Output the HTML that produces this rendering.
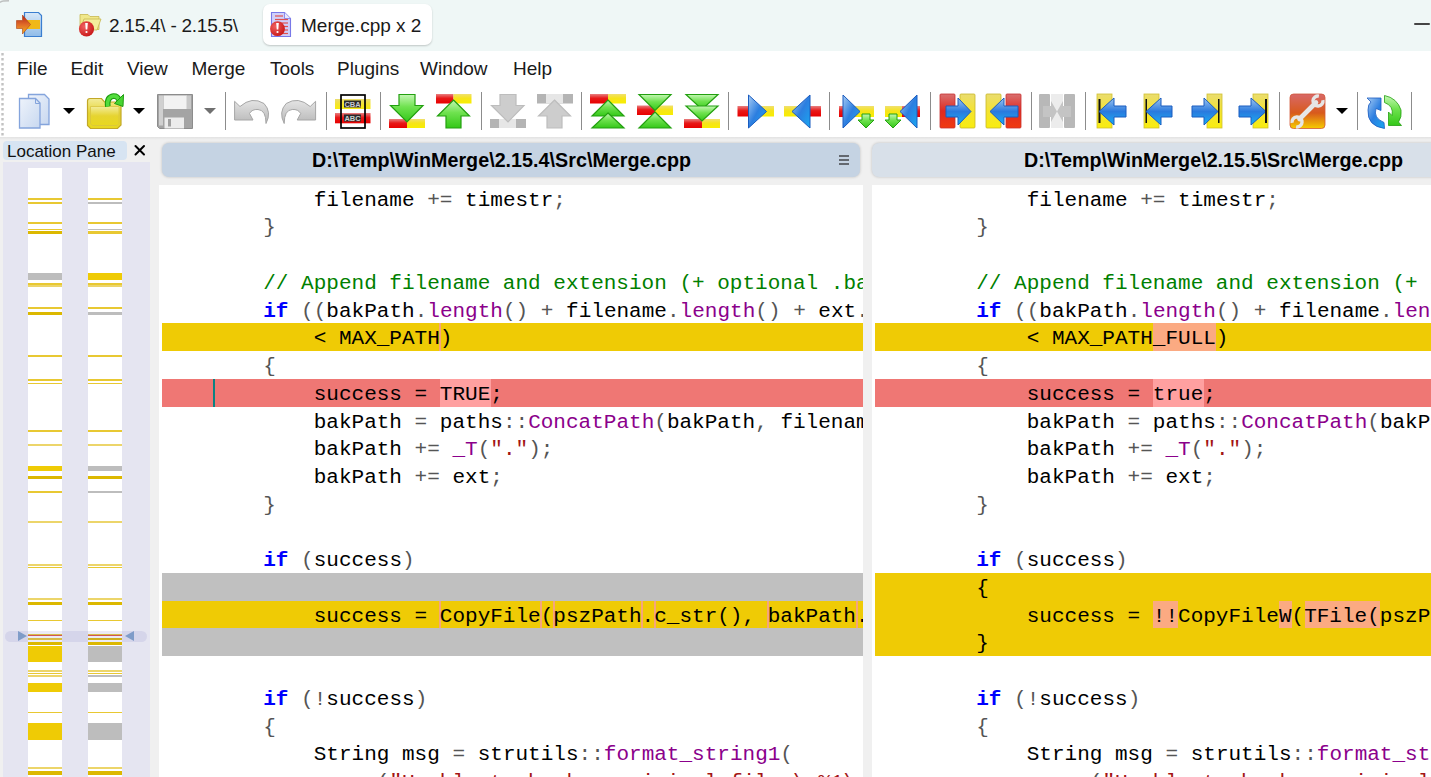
<!DOCTYPE html>
<html><head><meta charset="utf-8">
<style>
*{margin:0;padding:0;box-sizing:border-box}
html,body{width:1431px;height:777px;overflow:hidden;background:#f0f0f0;font-family:"Liberation Sans",sans-serif;position:relative}
.abs{position:absolute}
#tabbar{left:0;top:0;width:1431px;height:51px;background:#eff7f6}
#menubar{left:0;top:51px;width:1431px;height:86px;background:#fff}
.menu{position:absolute;top:58px;font-size:19px;color:#1a1a1a;white-space:pre;line-height:22px}
.ttl{position:absolute;font-size:19px;color:#1a1a1a;white-space:pre;line-height:22px}
/* location pane */
#lplabel{left:3px;top:141px;width:124px;height:19px;background:#d7e4f2;border-radius:4px}
#lptext{left:7px;top:140.5px;font-size:17px;line-height:22px;color:#111;white-space:pre}
#lpclose{left:132px;top:138px;font-size:17px;line-height:22px;color:#111}
#lp{left:3px;top:162px;width:147px;height:615px;background:#e5e5f1}
.bar{position:absolute;top:168px;width:34px;height:609px;background:#fff}
.ln{position:absolute;height:2px;width:34px}
/* headers */
.hdr{position:absolute;top:142.5px;height:34px;border-radius:7px;box-shadow:0 0 3px rgba(0,0,0,0.22)}
.htxt{position:absolute;top:149px;font-weight:bold;font-size:19.7px;letter-spacing:0.03px;line-height:22px;color:#000;white-space:pre}
/* code */
.pane{position:absolute;top:184.6px;height:600px;background:#fff;overflow:hidden}
.row{position:absolute;left:3px;right:0;height:27.74px}
.t{position:absolute;left:50.8px;top:2px;white-space:pre;font-family:"Liberation Mono",monospace;font-size:21.037px;line-height:27.74px;color:#000}
.k{color:#0000ff;font-weight:bold}
.c{color:#008000}
.o{color:#555}
.f{color:#8b008b}
.s{color:#a31515}
.y{background:#efcb05}
.r{background:#ef7774}
.g{background:#c0c0c0}
.y .o,.r .o,.g .o{color:#000}
.wd{position:absolute;top:0;height:100%;background:#fbaa82}
.wr{position:absolute;top:0;height:100%;background:#ffa0a0}
.caret{position:absolute;width:2px;height:27.74px;background:#0b8282}
.mk{position:absolute;top:0;height:100%;width:2px;background:#f5a57c}
</style></head><body>
<div id="tabbar" class="abs"></div>
<div id="menubar" class="abs"></div>


<!-- tab titles -->
<div class="ttl" style="left:109px;top:15px;letter-spacing:-0.25px">2.15.4\ - 2.15.5\</div>
<div class="abs" style="left:263px;top:4px;width:169px;height:41px;background:#fff;border-radius:7px;box-shadow:0 1px 2px rgba(0,0,0,0.2)"></div>
<div class="ttl" style="left:301px;top:15px">Merge.cpp x 2</div>
<div class="abs" style="left:1414px;top:23px;width:15.5px;height:1.8px;background:#454545;border-radius:1px"></div>

<svg class="abs" style="left:0;top:0" width="1431" height="140" viewBox="0 0 1431 140">
<defs>
<linearGradient id="gG" x1="0" y1="0" x2="0" y2="1"><stop offset="0" stop-color="#c4f7b4"/><stop offset="0.45" stop-color="#6fe24f"/><stop offset="1" stop-color="#34c818"/></linearGradient>
<linearGradient id="gR" x1="0" y1="0" x2="0" y2="1"><stop offset="0" stop-color="#e88080"/><stop offset="0.45" stop-color="#e81818"/><stop offset="1" stop-color="#e80000"/></linearGradient>
<linearGradient id="gY" x1="0" y1="0" x2="0" y2="1"><stop offset="0" stop-color="#f0e070"/><stop offset="0.45" stop-color="#f6e41a"/><stop offset="1" stop-color="#f8ee00"/></linearGradient>
<linearGradient id="gB" x1="0" y1="0" x2="1" y2="1"><stop offset="0" stop-color="#a8ccf4"/><stop offset="0.5" stop-color="#2c7ee0"/><stop offset="1" stop-color="#1aa8f0"/></linearGradient>
<linearGradient id="gBh" x1="0" y1="0" x2="0" y2="1"><stop offset="0" stop-color="#9cc4f0"/><stop offset="0.5" stop-color="#2a7ade"/><stop offset="1" stop-color="#18b0f4"/></linearGradient>
<linearGradient id="gRv" x1="0" y1="0" x2="0" y2="1"><stop offset="0" stop-color="#d87070"/><stop offset="0.5" stop-color="#e02a20"/><stop offset="1" stop-color="#f03a10"/></linearGradient>
<linearGradient id="gYv" x1="0" y1="0" x2="0" y2="1"><stop offset="0" stop-color="#eadc70"/><stop offset="0.5" stop-color="#f4e430"/><stop offset="1" stop-color="#f8ec10"/></linearGradient>
<linearGradient id="gGr" x1="0" y1="0" x2="0" y2="1"><stop offset="0" stop-color="#e4e4e4"/><stop offset="1" stop-color="#b8b8b8"/></linearGradient>
<linearGradient id="gW" x1="0" y1="0" x2="0" y2="1"><stop offset="0" stop-color="#d86868"/><stop offset="0.55" stop-color="#d85a1c"/><stop offset="1" stop-color="#f6cc00"/></linearGradient>
<linearGradient id="gDoc" x1="0" y1="0" x2="1" y2="1"><stop offset="0" stop-color="#eef3fb"/><stop offset="1" stop-color="#c8d8f0"/></linearGradient>
<linearGradient id="gFold" x1="0" y1="0" x2="0" y2="1"><stop offset="0" stop-color="#f2ec9a"/><stop offset="0.5" stop-color="#e6d430"/><stop offset="1" stop-color="#e8d820"/></linearGradient>
</defs>
<!-- tab icons -->
<linearGradient id="gAppDoc" x1="0" y1="0" x2="0" y2="1"><stop offset="0" stop-color="#d8e8f8"/><stop offset="1" stop-color="#90bce8"/></linearGradient>
<radialGradient id="gBadge" cx="0.35" cy="0.35" r="0.7"><stop offset="0" stop-color="#f06060"/><stop offset="1" stop-color="#c81818"/></radialGradient>
<linearGradient id="gOr" x1="0" y1="0" x2="0" y2="1"><stop offset="0" stop-color="#b02018"/><stop offset="0.5" stop-color="#e06a28"/><stop offset="1" stop-color="#f4b820"/></linearGradient>
<path d="M24.5 12.5h14l3 3v21h-17z" fill="url(#gAppDoc)" stroke="#3a7ed0" stroke-width="1.2"/>
<rect x="27" y="20" width="13" height="9" fill="#f0b818"/>
<path d="M16.5 20.5h6v-5.5l8 9.5-8 9.5v-5.5h-6z" fill="url(#gOr)" stroke="#b04010" stroke-width="0.6"/>
<path d="M80 14.5h8l2 2h9v13h-19z" fill="#f0e88a" stroke="#c8b850" stroke-width="0.8"/>
<path d="M84 19h17l-4 11h-17z" fill="#f4ee9c" stroke="#c8b850" stroke-width="0.8"/>
<circle cx="86.5" cy="28.8" r="7.6" fill="url(#gBadge)"/>
<path d="M85.2 23h2.6l-0.5 6.5h-1.6z" fill="#fff"/><circle cx="86.5" cy="32" r="1.1" fill="#fff"/>
<path d="M271.5 12.5h13l6 6v18h-19z" fill="#d0d0fa" stroke="#7878e8" stroke-width="1.1"/>
<path d="M284.5 12.5v6h6" fill="#e8e8fc" stroke="#7878e8" stroke-width="0.8"/>
<g stroke="#e05050" stroke-width="1.2"><line x1="275" y1="16" x2="283" y2="16"/><line x1="275" y1="19.5" x2="288" y2="19.5"/><line x1="280" y1="23" x2="288" y2="23"/><line x1="280" y1="26.5" x2="288" y2="26.5"/><line x1="280" y1="30" x2="288" y2="30"/><line x1="280" y1="33.5" x2="288" y2="33.5"/></g>
<circle cx="277.5" cy="28.7" r="7.4" fill="url(#gBadge)"/>
<path d="M276.2 23h2.6l-0.5 6.5h-1.6z" fill="#fff"/><circle cx="277.5" cy="32" r="1.1" fill="#fff"/>
<path d="M0 2.5Q1 0.8 9 0.8" fill="none" stroke="#a8a8a8" stroke-width="1.6" opacity="0.7"/>
<!-- gripper -->
<line x1="2.5" y1="53" x2="2.5" y2="137" stroke="#c2c2c2" stroke-width="2.4" stroke-dasharray="2.4,2.6"/>
<!-- separators -->
<g stroke="#8c8c8c" stroke-width="1">
<line x1="225.5" y1="92" x2="225.5" y2="130"/><line x1="326.5" y1="92" x2="326.5" y2="130"/><line x1="380.5" y1="92" x2="380.5" y2="130"/>
<line x1="481.5" y1="92" x2="481.5" y2="130"/><line x1="581.5" y1="92" x2="581.5" y2="130"/><line x1="728.5" y1="92" x2="728.5" y2="130"/>
<line x1="829.5" y1="92" x2="829.5" y2="130"/><line x1="930.5" y1="92" x2="930.5" y2="130"/><line x1="1031.5" y1="92" x2="1031.5" y2="130"/>
<line x1="1085.5" y1="92" x2="1085.5" y2="130"/><line x1="1279.5" y1="92" x2="1279.5" y2="130"/><line x1="1357.5" y1="92" x2="1357.5" y2="130"/>
<line x1="1411.5" y1="92" x2="1411.5" y2="130"/>
</g>
<!-- 1 new -->
<path d="M28.5 94.5h16l4.5 4.5v25.5h-20.5z" fill="url(#gDoc)" stroke="#84a4dc" stroke-width="1.3"/>
<path d="M19.5 98.5h16l4.5 4.5v25h-20.5z" fill="url(#gDoc)" stroke="#84a4dc" stroke-width="1.3"/>
<path d="M35.5 98.5v5h4.5" fill="none" stroke="#84a4dc" stroke-width="1"/>
<!-- dropdowns -->
<path d="M63 108h12l-6 6z" fill="#000"/>
<path d="M133 108h12l-6 6z" fill="#000"/>
<path d="M204 108h12l-6 6z" fill="#707070"/>
<path d="M1336 108h12l-6 6z" fill="#000"/>
<!-- 3 open -->
<path d="M87.5 101q0-2.5 2.5-2.5h11.5l3 3.5h14q2.5 0 2.5 2.5v20.5l-3.5 3.5h-27l-3-3z" fill="url(#gFold)" stroke="#c2a828" stroke-width="1.2"/>
<path d="M90.5 106.5h28.5v17l-2 2h-24.5l-2-2z" fill="url(#gFold)" stroke="#d8c440" stroke-width="0.8"/>
<path d="M107.8 106.5Q106.5 97 113.5 96Q117.5 95.8 119 100" fill="none" stroke="#1e9c10" stroke-width="5.6"/><path d="M107.8 106.5Q106.5 97 113.5 96Q117.5 95.8 119 100" fill="none" stroke="#52dc3c" stroke-width="3.4"/><path d="M114.5 103.5L123.5 94.5L123 106.5Z" fill="#48d432" stroke="#1e9c10" stroke-width="1"/>
<!-- 5 save -->
<path d="M157.5 94.5h35v34h-33l-2-2z" fill="#a4a4a4" stroke="#8c8c8c" stroke-width="1"/>
<rect x="159" y="95.5" width="4" height="30" fill="#d0d0d0"/>
<rect x="163.5" y="95.5" width="23.5" height="13.5" fill="#f2f2f2"/>
<rect x="186.5" y="95.5" width="4.5" height="13.5" fill="#c8c8c8"/>
<rect x="164.5" y="117.5" width="19.5" height="11" fill="#ececec"/>
<rect x="168" y="119" width="3" height="7.5" fill="#a0a0a0"/>
<!-- 8 undo / 9 redo -->
<path d="M234.6 101.3L240 106.5Q252 96 264 103.5Q272 112 266 123.5Q266 110 258 109.5Q252 109 249.5 113.5L253 120H234.6Z" fill="url(#gGr)" stroke="#a6a6a6" stroke-width="1"/>
<path d="M315.6 101.3L310.2 106.5Q298.2 96 286.2 103.5Q278.2 112 284.2 123.5Q284.2 110 292.2 109.5Q298.2 109 300.7 113.5L297.2 120H315.6Z" fill="url(#gGr)" stroke="#a6a6a6" stroke-width="1"/>
<!-- 11 CBA/ABC -->
<rect x="335" y="99" width="35.5" height="10" fill="url(#gYv)"/>
<rect x="335" y="113" width="35.5" height="10.3" fill="url(#gR)"/>
<rect x="344" y="100.5" width="17" height="7" fill="#2a2a2a"/>
<rect x="344" y="114.5" width="17" height="7" fill="#2a2a2a"/>
<text x="352.5" y="107" font-family="Liberation Sans" font-weight="bold" font-size="7.5" fill="#c8c8d0" text-anchor="middle">CBA</text>
<text x="352.5" y="121" font-family="Liberation Sans" font-weight="bold" font-size="7.5" fill="#c8d0d0" text-anchor="middle">ABC</text>
<rect x="341" y="95" width="24" height="33" fill="none" stroke="#000" stroke-width="1.7"/>
<!-- 13 down -->
<rect x="389" y="119" width="18" height="9" fill="url(#gR)"/><rect x="407" y="119" width="18" height="9" fill="url(#gY)"/>
<path d="M399 94.5h16v11h8l-16 16.5-16.5-16.5h8.5z" fill="url(#gG)" stroke="#23a010" stroke-width="1.2"/>
<!-- 14 up -->
<rect x="436" y="94" width="17.5" height="9.5" fill="url(#gR)"/><rect x="453.5" y="94" width="18" height="9.5" fill="url(#gY)"/>
<path d="M453.5 100l16 16h-8.5v12h-15v-12h-8.5z" fill="url(#gG)" stroke="#23a010" stroke-width="1.2"/>
<!-- 16 grey down -->
<rect x="490" y="119" width="36" height="9" fill="#b4b4b4"/><rect x="499" y="119" width="17" height="9" fill="#e6e6e6"/>
<path d="M500 94.5h16v11h8l-16 16.5-16.5-16.5h8.5z" fill="#cdcdcd" stroke="#bdbdbd" stroke-width="1.2"/>
<!-- 17 grey up -->
<rect x="537" y="94" width="36" height="9.5" fill="#b4b4b4"/><rect x="546" y="94" width="17" height="9.5" fill="#e6e6e6"/>
<path d="M554.5 100l16 16h-8.5v12h-15v-12h-8.5z" fill="#cdcdcd" stroke="#bdbdbd" stroke-width="1.2"/>
<!-- 19 -->
<rect x="590" y="94" width="18" height="9.5" fill="url(#gR)"/><rect x="608" y="94" width="18" height="9.5" fill="url(#gY)"/>
<path d="M608 100l16 16h-32z" fill="url(#gG)" stroke="#23a010" stroke-width="1.2"/>
<path d="M608 113l16 15h-32z" fill="url(#gG)" stroke="#23a010" stroke-width="1.2"/>
<!-- 20 -->
<rect x="637" y="105.5" width="18" height="9.5" fill="url(#gR)"/><rect x="655" y="105.5" width="18" height="9.5" fill="url(#gY)"/>
<path d="M639 94.5h32l-16 16z" fill="url(#gG)" stroke="#23a010" stroke-width="1.2"/>
<path d="M655 112l16 16h-32z" fill="url(#gG)" stroke="#23a010" stroke-width="1.2"/>
<!-- 21 -->
<rect x="684" y="119" width="18" height="9" fill="url(#gR)"/><rect x="702" y="119" width="18" height="9" fill="url(#gY)"/>
<path d="M686 94.5h32l-16 15z" fill="url(#gG)" stroke="#23a010" stroke-width="1.2"/>
<path d="M686 106h32l-16 15z" fill="url(#gG)" stroke="#23a010" stroke-width="1.2"/>
<!-- 23 -->
<rect x="737.5" y="106" width="18" height="10.5" fill="url(#gR)"/><rect x="755.5" y="106" width="18.5" height="10.5" fill="url(#gY)"/>
<path d="M748.5 95l18 16.5-18 16.5z" fill="url(#gB)" stroke="#1a5cc0" stroke-width="1"/>
<!-- 24 -->
<rect x="784" y="106" width="18" height="10.5" fill="url(#gY)"/><rect x="802" y="106" width="19" height="10.5" fill="url(#gR)"/>
<path d="M810 95l-18 16.5 18 16.5z" fill="url(#gB)" stroke="#1a5cc0" stroke-width="1"/>
<!-- 26 -->
<rect x="839" y="106" width="16" height="11" fill="url(#gR)"/><rect x="855" y="106" width="19" height="11" fill="url(#gY)"/>
<path d="M843 95l17 16.5-17 16.5z" fill="url(#gB)" stroke="#1a5cc0" stroke-width="1"/>
<path d="M862 114h8v6h4l-8 8-8-8h4z" fill="url(#gG)" stroke="#23a010" stroke-width="1"/>
<!-- 27 -->
<rect x="885" y="106" width="17" height="11" fill="url(#gY)"/><rect x="902" y="106" width="18" height="11" fill="url(#gR)"/>
<path d="M917 95l-17 16.5 17 16.5z" fill="url(#gB)" stroke="#1a5cc0" stroke-width="1"/>
<path d="M889 114h8v6h4l-8 8-8-8h4z" fill="url(#gG)" stroke="#23a010" stroke-width="1"/>
<!-- 29 -->
<rect x="940" y="94" width="15" height="34" rx="1" fill="url(#gRv)" stroke="#c83030" stroke-width="0.8"/>
<rect x="960" y="94" width="15" height="34" rx="1" fill="url(#gYv)" stroke="#c8b828" stroke-width="0.8"/>
<path d="M946 106h12v-8l13 13.5-13 13.5v-8h-12z" fill="url(#gBh)" stroke="#1a5cc0" stroke-width="1"/>
<!-- 30 -->
<rect x="986" y="94" width="15" height="34" rx="1" fill="url(#gYv)" stroke="#c8b828" stroke-width="0.8"/>
<rect x="1006" y="94" width="15" height="34" rx="1" fill="url(#gRv)" stroke="#c83030" stroke-width="0.8"/>
<path d="M1018 106h-14v-8l-14 13.5 14 13.5v-8h14z" fill="url(#gBh)" stroke="#1a5cc0" stroke-width="1"/>
<!-- 32 grey H -->
<rect x="1039" y="94" width="11" height="34" rx="1" fill="#b8b8b8"/>
<rect x="1051" y="94" width="12" height="34" fill="#ececec"/>
<rect x="1064" y="94" width="11" height="34" rx="1" fill="#b8b8b8"/>
<path d="M1043 106h8v-5l6 10.5-6 10.5v-5h-8z" fill="#c4c4c4"/>
<path d="M1071 106h-8v-5l-6 10.5 6 10.5v-5h8z" fill="#c4c4c4"/>
<!-- 34-37 -->
<rect x="1097" y="94" width="15" height="34" fill="url(#gYv)" stroke="#d0c030" stroke-width="0.8"/>
<rect x="1098.5" y="99" width="2" height="24" fill="#111"/>
<path d="M1099 111.5l15-13.5v8h12v11h-12v8z" fill="url(#gBh)" stroke="#1a5cc0" stroke-width="1"/>
<rect x="1144" y="94" width="15" height="34" fill="url(#gYv)" stroke="#d0c030" stroke-width="0.8"/>
<rect x="1145.5" y="99" width="1.5" height="24" fill="#111"/>
<path d="M1146 111.5l15-13.5v8h11v11h-11v8z" fill="url(#gBh)" stroke="#1a5cc0" stroke-width="1"/>
<rect x="1207" y="94" width="15" height="34" fill="url(#gYv)" stroke="#d0c030" stroke-width="0.8"/>
<path d="M1192 106h12v-8l14 13.5-14 13.5v-8h-12z" fill="url(#gBh)" stroke="#1a5cc0" stroke-width="1"/>
<rect x="1218" y="99" width="1.5" height="24" fill="#111"/>
<rect x="1253" y="94" width="15" height="34" fill="url(#gYv)" stroke="#d0c030" stroke-width="0.8"/>
<path d="M1239 106h12v-8l15 13.5-15 13.5v-8h-12z" fill="url(#gBh)" stroke="#1a5cc0" stroke-width="1"/>
<rect x="1265" y="99" width="2" height="24" fill="#111"/>
<!-- 39 wrench -->
<rect x="1290" y="94" width="35" height="34.5" rx="3.5" fill="url(#gW)" stroke="#d05838" stroke-width="0.8"/>
<path d="M1299.5 119l16.5-16.5" stroke="#e6e6e6" stroke-width="4.6" stroke-linecap="round"/>
<path d="M1322.9 100.1A5 5 0 1 1 1318.9 96.1" fill="none" stroke="#e6e6e6" stroke-width="3.4"/>
<path d="M1292.1 122.9A5 5 0 1 1 1296.1 126.9" fill="none" stroke="#e6e6e6" stroke-width="3.4"/>
<!-- 42 refresh -->
<path d="M1367 98L1381 98L1381 110.5L1376 108.5Q1373 118 1384 122.5L1384.5 128.5Q1367 126 1368 110Q1368 104 1371 102Z" fill="url(#gB)" stroke="#1a5cc0" stroke-width="0.8"/>
<path d="M1384.5 95.5Q1397 98 1401 110Q1402 117 1398.5 122L1401.5 125.5L1388.5 125.5L1388.5 112L1392 115.5Q1394 106 1384.5 102.5Z" fill="url(#gG)" stroke="#23a010" stroke-width="0.8"/>
</svg>
<!-- menu -->
<div class="menu" style="left:17px">File</div>
<div class="menu" style="left:70.5px">Edit</div>
<div class="menu" style="left:127px">View</div>
<div class="menu" style="left:191.5px">Merge</div>
<div class="menu" style="left:270px">Tools</div>
<div class="menu" style="left:337px">Plugins</div>
<div class="menu" style="left:420px">Window</div>
<div class="menu" style="left:513px">Help</div>

<!-- location pane -->
<div class="abs" style="left:0;top:137px;width:1431px;height:3px;background:linear-gradient(#e2e2e2,#f0f0f0)"></div>
<div id="lplabel" class="abs"></div>
<div id="lptext" class="abs">Location Pane</div>
<svg class="abs" style="left:130px;top:141px" width="20" height="18"><g stroke="#000" stroke-width="2" stroke-linecap="round"><line x1="5.5" y1="5" x2="14" y2="13.5"/><line x1="14" y1="5" x2="5.5" y2="13.5"/></g></svg>
<div id="lp" class="abs"></div>
<div class="bar" style="left:28px"></div>
<div class="bar" style="left:88px"></div>
<!--LP-->
<div class="ln" style="left:28px;top:198px;height:2.0px;background:#e8c832"></div>
<div class="ln" style="left:88px;top:198px;height:2.0px;background:#e8c832"></div>
<div class="ln" style="left:28px;top:202px;height:2.0px;background:#e8c832"></div>
<div class="ln" style="left:88px;top:202px;height:2.0px;background:#bdbdbd"></div>
<div class="ln" style="left:28px;top:222px;height:2.0px;background:#e8c832"></div>
<div class="ln" style="left:88px;top:222px;height:2.0px;background:#e8c832"></div>
<div class="ln" style="left:28px;top:228.6px;height:1.4px;background:#e8c832"></div>
<div class="ln" style="left:88px;top:228.6px;height:1.4px;background:#bdbdbd"></div>
<div class="ln" style="left:28px;top:231.3px;height:2.5px;background:#dcb800"></div>
<div class="ln" style="left:88px;top:231.3px;height:2.5px;background:#e8c832"></div>
<div class="ln" style="left:28px;top:273px;height:7.0px;background:#bdbdbd"></div>
<div class="ln" style="left:88px;top:273px;height:7.0px;background:#efcb05"></div>
<div class="ln" style="left:28px;top:283px;height:1.6px;background:#e8c832"></div>
<div class="ln" style="left:88px;top:283px;height:1.6px;background:#e8c832"></div>
<div class="ln" style="left:28px;top:285.4px;height:1.6px;background:#ecd56a"></div>
<div class="ln" style="left:88px;top:285.4px;height:1.6px;background:#ecd56a"></div>
<div class="ln" style="left:28px;top:307px;height:1.5px;background:#e8c832"></div>
<div class="ln" style="left:88px;top:307px;height:1.5px;background:#e8c832"></div>
<div class="ln" style="left:28px;top:312px;height:3.0px;background:#dcb800"></div>
<div class="ln" style="left:88px;top:312px;height:3.0px;background:#bdbdbd"></div>
<div class="ln" style="left:28px;top:355px;height:1.5px;background:#e8c832"></div>
<div class="ln" style="left:88px;top:355px;height:1.5px;background:#e8c832"></div>
<div class="ln" style="left:28px;top:379px;height:1.5px;background:#e8c832"></div>
<div class="ln" style="left:88px;top:379px;height:1.5px;background:#e8c832"></div>
<div class="ln" style="left:28px;top:382.6px;height:1.4px;background:#e8c832"></div>
<div class="ln" style="left:88px;top:382.6px;height:1.4px;background:#e8c832"></div>
<div class="ln" style="left:28px;top:430.3px;height:1.7px;background:#e8c832"></div>
<div class="ln" style="left:88px;top:430.3px;height:1.7px;background:#e8c832"></div>
<div class="ln" style="left:28px;top:444px;height:2.0px;background:#ecd56a"></div>
<div class="ln" style="left:88px;top:444px;height:2.0px;background:#ecd56a"></div>
<div class="ln" style="left:28px;top:466px;height:5.0px;background:#efcb05"></div>
<div class="ln" style="left:88px;top:466px;height:5.0px;background:#bdbdbd"></div>
<div class="ln" style="left:28px;top:476px;height:3.0px;background:#dcb800"></div>
<div class="ln" style="left:88px;top:476px;height:3.0px;background:#dcb800"></div>
<div class="ln" style="left:28px;top:491px;height:1.5px;background:#e8c832"></div>
<div class="ln" style="left:88px;top:491px;height:1.5px;background:#bdbdbd"></div>
<div class="ln" style="left:28px;top:521px;height:2.0px;background:#ecd56a"></div>
<div class="ln" style="left:88px;top:521px;height:2.0px;background:#ecd56a"></div>
<div class="ln" style="left:28px;top:564px;height:2.0px;background:#ecd56a"></div>
<div class="ln" style="left:88px;top:564px;height:2.0px;background:#ecd56a"></div>
<div class="ln" style="left:28px;top:566.5px;height:1.8px;background:#e8c832"></div>
<div class="ln" style="left:88px;top:566.5px;height:1.8px;background:#e8c832"></div>
<div class="ln" style="left:28px;top:598px;height:2.0px;background:#ecd56a"></div>
<div class="ln" style="left:88px;top:598px;height:2.0px;background:#ecd56a"></div>
<div class="ln" style="left:28px;top:602px;height:2.7px;background:#dcb800"></div>
<div class="ln" style="left:88px;top:602px;height:2.7px;background:#dcb800"></div>
<div class="ln" style="left:28px;top:619.6px;height:1.6px;background:#e8c832"></div>
<div class="ln" style="left:88px;top:619.6px;height:1.6px;background:#e8c832"></div>
<div class="ln" style="left:28px;top:633.8px;height:2.4px;background:#e8c832"></div>
<div class="ln" style="left:88px;top:633.8px;height:2.4px;background:#e8c832"></div>
<div class="ln" style="left:28px;top:637.7px;height:2.1px;background:#e8c832"></div>
<div class="ln" style="left:88px;top:637.7px;height:2.1px;background:#dcb800"></div>
<div class="ln" style="left:28px;top:642.4px;height:2.6px;background:#dcb800"></div>
<div class="ln" style="left:88px;top:642.4px;height:2.6px;background:#dcb800"></div>
<div class="ln" style="left:28px;top:646.3px;height:16.1px;background:#efcb05"></div>
<div class="ln" style="left:88px;top:646.3px;height:16.1px;background:#bdbdbd"></div>
<div class="ln" style="left:28px;top:669.8px;height:2.0px;background:#ecd56a"></div>
<div class="ln" style="left:88px;top:669.8px;height:2.0px;background:#ecd56a"></div>
<div class="ln" style="left:28px;top:672.7px;height:1.3px;background:#e8c832"></div>
<div class="ln" style="left:88px;top:672.7px;height:1.3px;background:#e8c832"></div>
<div class="ln" style="left:28px;top:675px;height:1.8px;background:#ecd56a"></div>
<div class="ln" style="left:88px;top:675px;height:1.8px;background:#bdbdbd"></div>
<div class="ln" style="left:28px;top:683px;height:8.5px;background:#efcb05"></div>
<div class="ln" style="left:88px;top:683px;height:8.5px;background:#bdbdbd"></div>
<div class="ln" style="left:28px;top:711.5px;height:1.5px;background:#e8c832"></div>
<div class="ln" style="left:88px;top:711.5px;height:1.5px;background:#e8c832"></div>
<div class="ln" style="left:28px;top:723px;height:16.7px;background:#efcb05"></div>
<div class="ln" style="left:88px;top:723px;height:16.7px;background:#bdbdbd"></div>
<div class="ln" style="left:28px;top:767px;height:2.0px;background:#ecd56a"></div>
<div class="ln" style="left:88px;top:767px;height:2.0px;background:#ecd56a"></div>
<div class="ln" style="left:28px;top:771px;height:4.0px;background:#dcb800"></div>
<div class="ln" style="left:88px;top:771px;height:4.0px;background:#dcb800"></div>
<div class="ln" style="left:28px;top:634.6px;height:1px;background:#e05040"></div>
<div class="ln" style="left:88px;top:634.6px;height:1px;background:#e05040"></div>
<div class="abs" style="left:5px;top:631px;width:142px;height:11px;border-radius:6px;background:rgba(130,130,200,0.16)"></div>
<svg class="abs" style="left:0;top:626px" width="150" height="20"><path d="M18 5l9 5-9 5z" fill="#7f9cc8"/><path d="M134 5l-9 5 9 5z" fill="#7f9cc8"/></svg>
<!--/LP-->

<!-- headers -->
<div class="hdr" style="left:162px;width:698px;background:#c5d3e3"></div>
<svg class="abs" style="left:837px;top:153px" width="14" height="14"><g stroke="#222" stroke-width="1.2"><line x1="2" y1="3" x2="12" y2="3"/><line x1="2" y1="7" x2="12" y2="7"/><line x1="2" y1="11" x2="12" y2="11"/></g></svg>
<div class="htxt" style="left:312px">D:\Temp\WinMerge\2.15.4\Src\Merge.cpp</div>
<div class="hdr" style="left:872px;width:600px;background:#d8e0e9"></div>
<div class="htxt" style="left:1024px">D:\Temp\WinMerge\2.15.5\Src\Merge.cpp</div>

<!-- left pane -->
<div class="pane" id="left" style="left:159px;width:704px">
<div class="row" style="top:0.00px"><div class="t">        filename <span class="o">+=</span> timestr<span class="o">;</span></div></div>
<div class="row" style="top:27.74px"><div class="t">    <span class="o">}</span></div></div>
<div class="row" style="top:55.48px"><div class="t"></div></div>
<div class="row" style="top:83.22px"><div class="t">    <span class="c">// Append filename and extension (+ optional .bak)</span></div></div>
<div class="row" style="top:110.96px"><div class="t">    <span class="k">if</span> <span class="o">(</span><span class="o">(</span>bakPath<span class="o">.</span><span class="f">length</span><span class="o">(</span><span class="o">)</span> <span class="o">+</span> filename<span class="o">.</span><span class="f">length</span><span class="o">(</span><span class="o">)</span> <span class="o">+</span> ext<span class="o">.</span><span class="f">length</span><span class="o">(</span><span class="o">)</span></div></div>
<div class="row y" style="top:138.70px"><div class="mk" style="left:277.03px"></div><div class="t">        &lt; MAX_PATH)</div></div>
<div class="row" style="top:166.44px"><div class="t">    <span class="o">{</span></div></div>
<div class="row r" style="top:194.18px"><div class="wr" style="left:278.03px;width:50.50px"></div><div class="t">        success = TRUE;</div></div>
<div class="row" style="top:221.92px"><div class="t">        bakPath <span class="o">=</span> paths<span class="o">::</span><span class="f">ConcatPath</span><span class="o">(</span>bakPath<span class="o">,</span> filename<span class="o">)</span><span class="o">;</span></div></div>
<div class="row" style="top:249.66px"><div class="t">        bakPath <span class="o">+=</span> <span class="f">_T</span><span class="o">(</span><span class="s">"."</span><span class="o">)</span><span class="o">;</span></div></div>
<div class="row" style="top:277.40px"><div class="t">        bakPath <span class="o">+=</span> ext<span class="o">;</span></div></div>
<div class="row" style="top:305.14px"><div class="t">    <span class="o">}</span></div></div>
<div class="row" style="top:332.88px"><div class="t"></div></div>
<div class="row" style="top:360.62px"><div class="t">    <span class="k">if</span> <span class="o">(</span>success<span class="o">)</span></div></div>
<div class="row g" style="top:388.36px"><div class="t"></div></div>
<div class="row y" style="top:416.10px"><div class="mk" style="left:277.03px"></div><div class="mk" style="left:378.02px"></div><div class="mk" style="left:390.65px"></div><div class="mk" style="left:479.02px"></div><div class="mk" style="left:491.64px"></div><div class="mk" style="left:605.26px"></div><div class="mk" style="left:693.62px"></div><div class="t">        success = CopyFile(pszPath.c_str(), bakPath.c_str(), FALSE);</div></div>
<div class="row g" style="top:443.84px"><div class="t"></div></div>
<div class="row" style="top:471.58px"><div class="t"></div></div>
<div class="row" style="top:499.32px"><div class="t">    <span class="k">if</span> <span class="o">(</span><span class="o">!</span>success<span class="o">)</span></div></div>
<div class="row" style="top:527.06px"><div class="t">    <span class="o">{</span></div></div>
<div class="row" style="top:554.80px"><div class="t">        String msg <span class="o">=</span> strutils<span class="o">::</span><span class="f">format_string1</span><span class="o">(</span></div></div>
<div class="row" style="top:582.54px"><div class="t">            <span class="f">_</span><span class="o">(</span><span class="s">"Unable to backup original file:\n%1\n\nContinue copying items?"</span><span class="o">)</span><span class="o">,</span></div></div>
<div class="caret" style="left:54px;top:194.18px"></div>
</div>

<!-- right pane -->
<div class="pane" id="right" style="left:872px;width:559px">
<div class="row" style="top:0.00px"><div class="t">        filename <span class="o">+=</span> timestr<span class="o">;</span></div></div>
<div class="row" style="top:27.74px"><div class="t">    <span class="o">}</span></div></div>
<div class="row" style="top:55.48px"><div class="t"></div></div>
<div class="row" style="top:83.22px"><div class="t">    <span class="c">// Append filename and extension (+ optional .bak)</span></div></div>
<div class="row" style="top:110.96px"><div class="t">    <span class="k">if</span> <span class="o">(</span><span class="o">(</span>bakPath<span class="o">.</span><span class="f">length</span><span class="o">(</span><span class="o">)</span> <span class="o">+</span> filename<span class="o">.</span><span class="f">length</span><span class="o">(</span><span class="o">)</span> <span class="o">+</span> ext<span class="o">.</span><span class="f">length</span><span class="o">(</span><span class="o">)</span></div></div>
<div class="row y" style="top:138.70px"><div class="wd" style="left:278.03px;width:63.12px"></div><div class="t">        &lt; MAX_PATH_FULL)</div></div>
<div class="row" style="top:166.44px"><div class="t">    <span class="o">{</span></div></div>
<div class="row r" style="top:194.18px"><div class="wr" style="left:278.03px;width:50.50px"></div><div class="t">        success = true;</div></div>
<div class="row" style="top:221.92px"><div class="t">        bakPath <span class="o">=</span> paths<span class="o">::</span><span class="f">ConcatPath</span><span class="o">(</span>bakPath<span class="o">,</span> filename<span class="o">)</span><span class="o">;</span></div></div>
<div class="row" style="top:249.66px"><div class="t">        bakPath <span class="o">+=</span> <span class="f">_T</span><span class="o">(</span><span class="s">"."</span><span class="o">)</span><span class="o">;</span></div></div>
<div class="row" style="top:277.40px"><div class="t">        bakPath <span class="o">+=</span> ext<span class="o">;</span></div></div>
<div class="row" style="top:305.14px"><div class="t">    <span class="o">}</span></div></div>
<div class="row" style="top:332.88px"><div class="t"></div></div>
<div class="row" style="top:360.62px"><div class="t">    <span class="k">if</span> <span class="o">(</span>success<span class="o">)</span></div></div>
<div class="row y" style="top:388.36px"><div class="t">    {</div></div>
<div class="row y" style="top:416.10px"><div class="wd" style="left:278.03px;width:25.25px"></div><div class="wd" style="left:404.27px;width:12.62px"></div><div class="wd" style="left:429.52px;width:75.74px"></div><div class="t">        success = !!CopyFileW(TFile(pszPath).wstr().c_str(), bakPath.c_str(), FALSE);</div></div>
<div class="row y" style="top:443.84px"><div class="t">    }</div></div>
<div class="row" style="top:471.58px"><div class="t"></div></div>
<div class="row" style="top:499.32px"><div class="t">    <span class="k">if</span> <span class="o">(</span><span class="o">!</span>success<span class="o">)</span></div></div>
<div class="row" style="top:527.06px"><div class="t">    <span class="o">{</span></div></div>
<div class="row" style="top:554.80px"><div class="t">        String msg <span class="o">=</span> strutils<span class="o">::</span><span class="f">format_string1</span><span class="o">(</span></div></div>
<div class="row" style="top:582.54px"><div class="t">            <span class="f">_</span><span class="o">(</span><span class="s">"Unable to backup original file:\n%1\n\nContinue copying items?"</span><span class="o">)</span><span class="o">,</span></div></div>
</div>

</body></html>
